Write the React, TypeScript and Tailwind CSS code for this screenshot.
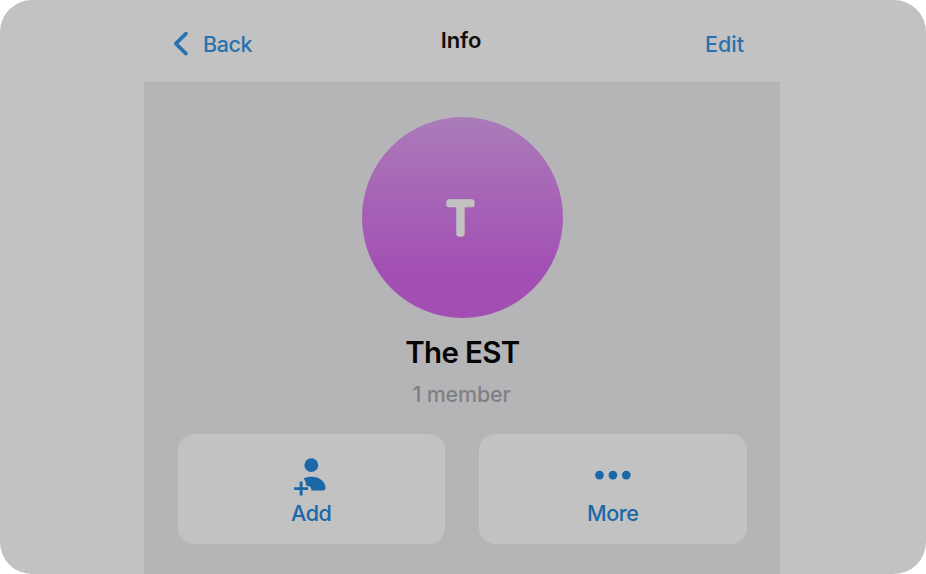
const INK = "#1b68a8";

function ActionCard({ label, children }: { label: string; children: React.ReactNode }) {
  return (
    <button className="flex h-[110px] flex-1 flex-col items-center rounded-[16px] bg-[#c2c2c2] text-[#1b68a8]">
      <span className="mt-[22px] flex h-[40px] items-center justify-center">{children}</span>
      <span className="mt-[3px] text-[21.5px] leading-[28px] font-[450] tracking-[-0.4px]">{label}</span>
    </button>
  );
}

export default function App() {
  return (
    <div className="flex h-[574px] w-[926px] justify-center overflow-hidden rounded-[32px] bg-[#c2c2c2] pr-[2px] font-['Inter',sans-serif]">
      <main className="flex w-[636px] flex-col bg-[#b5b5b8]">
        <header className="grid h-[83px] grid-cols-3 border-b border-[#b0b0b3] bg-[#c2c2c2] text-[21.5px] leading-[28px] font-[450] text-[#2872af]">
          <button className="mt-[30px] ml-[29px] flex h-[28px] items-center">
            <svg width="16" height="26" viewBox="0 0 16 26" fill="none">
              <path d="M13 2.6 2.8 12.6l10.2 10" stroke="currentColor" strokeWidth="3.6" strokeLinecap="round" strokeLinejoin="round" />
            </svg>
            <span className="ml-[14px] tracking-[-0.4px]">Back</span>
          </button>
          <h1 className="mt-[26px] h-[28px] pr-[2px] text-center text-[22px] font-semibold tracking-[-0.1px] text-[#101010]">Info</h1>
          <button className="mt-[30px] mr-[36px] h-[28px] justify-self-end">Edit</button>
        </header>
        <div className="flex flex-col items-center">
          <div className="mt-[34px] size-[201px] overflow-hidden rounded-full bg-linear-to-b from-[#aa7bb9] from-0% via-[#a55eb5] via-50% to-[#a24eb3] to-80%">
            <svg width="201" height="201" viewBox="0 0 201 201">
              <text x="98.3" y="116.6" textAnchor="middle" fontFamily="Inter, sans-serif" fontSize="43" fontWeight="300" fill="#c2c2c2" stroke="#c2c2c2" strokeWidth="5.3" strokeLinejoin="round">T</text>
            </svg>
          </div>
          <h2 className="mt-[15px] pl-[1px] text-[29.5px] leading-[38px] font-semibold tracking-[-0.65px] text-[#050505]">The EST</h2>
          <p className="mt-[9px] pr-[1px] text-[21.5px] leading-[28px] font-[450] tracking-[-0.2px] text-[#808083]">1 member</p>
        </div>
        <div className="mt-[25.5px] flex gap-[34px] px-[33.5px]">
          <ActionCard label="Add">
            <svg className="ml-[2px]" width="36" height="40" viewBox="0 0 36 40" fill={INK}>
              <circle cx="17.3" cy="9.2" r="6.9" />
              <path d="M9.4 22.6C11.7 21.4 14.4 20.8 17.6 20.8c7.4 0 14 4.8 14 11 0 1.8-.9 2.7-2.8 2.7H17.4c.2-2.4-.9-4.2-3.4-4.4-1.3-.1-2-.7-2.1-1.9-.2-2.6-.9-4.7-2.5-5.6z" />
              <path d="M7.1 25.6v14M.1 32.6h14" fill="none" stroke={INK} strokeWidth="2.9" />
            </svg>
          </ActionCard>
          <ActionCard label="More">
            <svg width="40" height="40" viewBox="0 0 40 40" fill={INK}>
              <circle cx="6.5" cy="19.1" r="4.4" />
              <circle cx="19.9" cy="19.1" r="4.4" />
              <circle cx="33.3" cy="19.1" r="4.4" />
            </svg>
          </ActionCard>
        </div>
      </main>
    </div>
  );
}
